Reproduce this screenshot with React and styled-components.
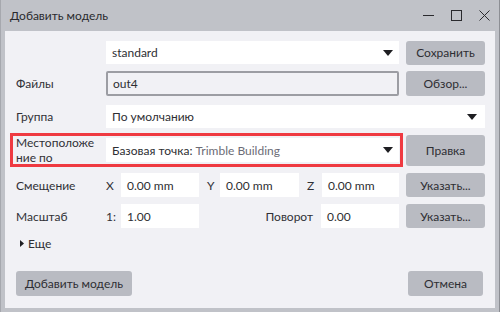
import React from "react";
import styled, { createGlobalStyle } from "styled-components";

const Global = createGlobalStyle`
  html, body { margin: 0; padding: 0; overflow: hidden; }
  body { font-family: Lato, "Liberation Sans", sans-serif; font-size: 12px; color: #2e2e33; }
  * { box-sizing: border-box; }
`;

const Frame = styled.div`
  width: 500px;
  height: 312px;
  background: #c0c2c8;
  border-left: 1px solid #a6a8ae;
  border-right: 1px solid #8c8e94;
  display: flex;
  flex-direction: column;
`;

const TitleBar = styled.div`
  height: 31px;
  flex: none;
  display: flex;
  align-items: center;
  padding: 0 9px 0 9px;
`;

const Title = styled.div`
  flex: 1;
  font-size: 12px;
  color: #2a2a2e;
  margin-top: -1px;
`;

const WinButtons = styled.div`
  display: flex;
  align-items: center;
  gap: 17px;
  margin-right: 0px;
`;

const Panel = styled.div`
  flex: 1;
  margin: 0 4px 4px 4px;
  background: #f1f1f5;
  display: flex;
  flex-direction: column;
  padding: 10px 0 12px 0;
`;

const Row = styled.div`
  display: flex;
  align-items: center;
  height: ${(p) => p.$h || 24}px;
  margin-top: ${(p) => p.$mt || 0}px;
  padding-left: ${(p) => (p.$pl !== undefined ? p.$pl : 11)}px;
`;

const Label = styled.div`
  width: 90px;
  flex: none;
  line-height: 15px;
  color: #303036;
`;

const Spacer = styled.div`
  width: ${(p) => p.$w}px;
  flex: none;
`;

const Combo = styled.div`
  width: ${(p) => p.$w || 293}px;
  height: ${(p) => p.$h || 24}px;
  flex: none;
  background: #fff;
  display: flex;
  align-items: center;
  justify-content: space-between;
  padding: 0 6px 0 6px;
  color: #2e2e33;
`;

const Muted = styled.span`
  color: #6c6c76;
`;

const FileInput = styled.div`
  width: 293px;
  height: 25px;
  flex: none;
  border: 2px solid #9c9da3;
  border-radius: 2px;
  background: #f1f1f5;
  display: flex;
  align-items: center;
  padding-left: 5px;
`;

const Input = styled.div`
  width: ${(p) => p.$w}px;
  height: 24px;
  flex: none;
  background: #fff;
  display: flex;
  align-items: center;
  padding-left: 6px;
`;

const Axis = styled.div`
  width: ${(p) => p.$w}px;
  flex: none;
  padding-left: ${(p) => p.$pl || 0}px;
  color: #303036;
`;

const Button = styled.div`
  width: ${(p) => p.$w || 79}px;
  height: ${(p) => p.$h || 24}px;
  margin-left: ${(p) => (p.$ml !== undefined ? p.$ml : 7)}px;
  flex: none;
  background: #b9bbc2;
  border-radius: 3px;
  display: flex;
  align-items: center;
  justify-content: center;
  color: #2e2e33;
`;

const RedBox = styled.div`
  margin-left: 5px;
  height: 34px;
  border: 3px solid #ef3a41;
  display: flex;
  align-items: center;
  padding: 0 1px 0 3px;
`;

const Grow = styled.div`
  flex: 1;
`;

const RightLabel = styled.div`
  margin-right: 8px;
  color: #303036;
`;

const More = styled.div`
  display: flex;
  align-items: center;
  gap: 4px;
  margin-top: 8px;
  height: 14px;
  padding-left: 15px;
  color: #2e2e33;
`;

const Footer = styled.div`
  margin-top: auto;
  display: flex;
  justify-content: space-between;
  padding: 0 12px 0 11px;
`;

const Arrow = () => (
  <svg width="10" height="6" viewBox="0 0 10 6">
    <polygon points="0,0 10,0 5,6" fill="#1e1e22" />
  </svg>
);

export default function App() {
  return (
    <>
      <Global />
      <Frame>
        <TitleBar>
          <Title>Добавить модель</Title>
          <WinButtons>
            <svg width="11" height="11" viewBox="0 0 11 11">
              <line x1="0" y1="5.5" x2="11" y2="5.5" stroke="#2a2a2e" strokeWidth="1" />
            </svg>
            <svg width="11" height="11" viewBox="0 0 11 11">
              <rect x="0.5" y="0.5" width="10" height="10" fill="none" stroke="#2a2a2e" strokeWidth="1" />
            </svg>
            <svg width="11" height="11" viewBox="0 0 11 11">
              <path d="M0.5 0.5 L10.5 10.5 M10.5 0.5 L0.5 10.5" stroke="#2a2a2e" strokeWidth="1" />
            </svg>
          </WinButtons>
        </TitleBar>
        <Panel>
          <Row $h={23}>
            <Spacer $w={90} />
            <Combo $h={23}>
              standard
              <Arrow />
            </Combo>
            <Button>Сохранить</Button>
          </Row>
          <Row $mt={7} $h={25}>
            <Label>Файлы</Label>
            <FileInput>out4</FileInput>
            <Button $h={25}>Обзор...</Button>
          </Row>
          <Row $mt={9} $h={23}>
            <Label>Группа</Label>
            <Combo $w={379} $h={23} style={{ paddingRight: 8 }}>
              По умолчанию
              <Arrow />
            </Combo>
          </Row>
          <Row $mt={5} $h={34} $pl={0}>
            <RedBox>
              <Label>
                Местоположе
                <br />
                ние по
              </Label>
              <Combo>
                <span>
                  Базовая точка: <Muted>Trimble Building</Muted>
                </span>
                <Arrow />
              </Combo>
            </RedBox>
            <Button $ml={3} $h={31}>Правка</Button>
          </Row>
          <Row $mt={6}>
            <Label>Смещение</Label>
            <Axis $w={15}>X</Axis>
            <Input $w={78}>0.00 mm</Input>
            <Axis $w={21} $pl={8}>Y</Axis>
            <Input $w={79}>0.00 mm</Input>
            <Axis $w={23} $pl={8}>Z</Axis>
            <Input $w={77}>0.00 mm</Input>
            <Button>Указать...</Button>
          </Row>
          <Row $mt={7}>
            <Label>Масштаб</Label>
            <Axis $w={15}>1:</Axis>
            <Input $w={78}>1.00</Input>
            <Grow />
            <RightLabel>Поворот</RightLabel>
            <Input $w={78}>0.00</Input>
            <Button style={{ marginRight: 10 }}>Указать...</Button>
          </Row>
          <More>
            <svg width="4" height="7" viewBox="0 0 4 7">
              <polygon points="0,0 4,3.5 0,7" fill="#1e1e22" />
            </svg>
            Еще
          </More>
          <Footer>
            <Button $w={116} $h={25} $ml={0}>Добавить модель</Button>
            <Button $w={75} $h={25} $ml={0}>Отмена</Button>
          </Footer>
        </Panel>
      </Frame>
    </>
  );
}
